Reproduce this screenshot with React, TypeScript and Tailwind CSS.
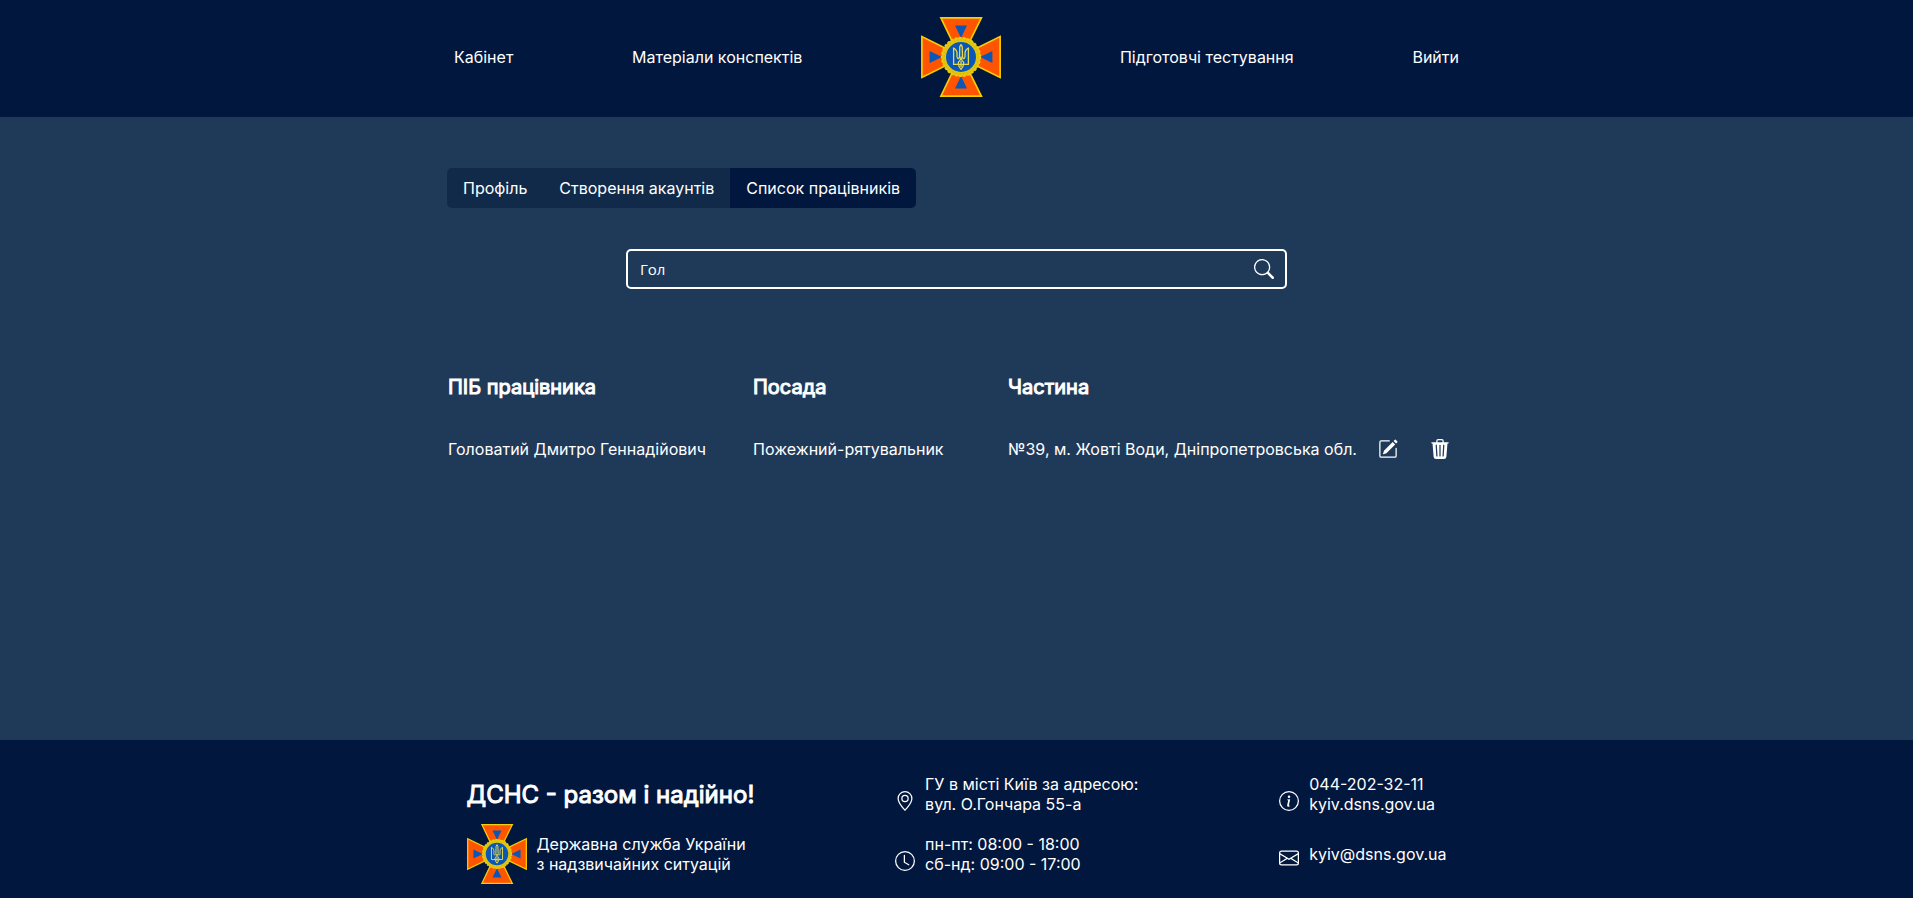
import { useState } from "react";
import type { ReactNode } from "react";
import {
  BsClock,
  BsEnvelope,
  BsGeoAlt,
  BsInfoCircle,
  BsPencilSquare,
  BsSearch,
  BsTrash3Fill,
} from "react-icons/bs";

const employees = [
  {
    name: "Головатий Дмитро Геннадійович",
    position: "Пожежний-рятувальник",
    unit: "№39, м. Жовті Води, Дніпропетровська обл.",
  },
];

const tabs = ["Профіль", "Створення акаунтів", "Список працівників"];

function Emblem({ className }: { className: string }) {
  return (
    <svg viewBox="0 0 80 80" className={className} role="img" aria-label="ДСНС">
      <g fill="#ff5500" stroke="#f8cc00" strokeWidth="1.7">
        <path d="M19.9 .9H60.4L49 24H31Z" />
        <path d="M19.9 79.1H60.4L49 56H31Z" />
        <path d="M.9 19.6V60.4L24 49V31Z" />
        <path d="M79.1 19.6V60.4L56 49V31Z" />
      </g>
      <g fill="#0b57b7">
        <path d="M34 8.6H46L40 21Z" />
        <path d="M34 71.4H46L40 59Z" />
        <path d="M8.6 34V46L21 40Z" />
        <path d="M71.4 34V46L59 40Z" />
      </g>
      <circle cx="40" cy="40" r="17.2" fill="#0b57b7" stroke="#e2c60e" strokeWidth="4.4" />
      <circle cx="40" cy="40" r="19.3" fill="none" stroke="#f0cc08" strokeWidth="1.6" strokeDasharray="2.6 1.6" />
      <circle cx="40" cy="40" r="17" fill="none" stroke="#c9b41c" strokeWidth="1" strokeDasharray="1.4 2.4" />
      <g fill="none" stroke="#e6d94a" strokeWidth="1.3" strokeLinejoin="round">
        <path d="M32.6 31V47.4H37.4C37.8 49.6 38.7 51 40 52.2C41.3 51 42.2 49.6 42.6 47.4H47.4V31C45 32.4 43.8 34.4 44 37C44.2 39.2 44.4 40.4 43.2 41.4C42 41.8 41.5 40.8 41.5 39.4L41.2 29.6L40 27.6L38.8 29.6L38.5 39.4C38.5 40.8 38 41.8 36.8 41.4C35.6 40.4 35.8 39.2 36 37C36.2 34.4 35 32.4 32.6 31Z" />
        <path d="M37.4 47.4V45.3C38.9 43.8 39.8 42.5 40 40C40.2 42.5 41.1 43.8 42.6 45.3V47.4H37.4M40 44V50" />
      </g>
    </svg>
  );
}

type ContactProps = { icon: ReactNode; single?: boolean; children: ReactNode };

function Contact({ icon, single = false, children }: ContactProps) {
  return (
    <div className="flex h-10 items-center gap-2.5">
      <span className={single ? "pt-2" : "pt-3.5"}>{icon}</span>
      <div>{children}</div>
    </div>
  );
}

export default function App() {
  const [query, setQuery] = useState("Гол");
  const [tab, setTab] = useState(2);

  return (
    <div className="flex min-h-screen flex-col bg-[#1f3a59] font-['Inter',sans-serif] text-base leading-5 text-white">
      <header className="bg-[#02173e] pt-[17px] pb-5">
        <nav className="mx-auto flex w-full max-w-[1005px] items-center justify-between">
          <a href="#cabinet">Кабінет</a>
          <a href="#materials">Матеріали конспектів</a>
          <a href="#home">
            <Emblem className="size-20" />
          </a>
          <a href="#tests">Підготовчі тестування</a>
          <a href="#logout">Вийти</a>
        </nav>
      </header>

      <main className="mx-auto w-full max-w-[1019px] flex-1 pt-[51px]">
        <div role="tablist" className="inline-flex overflow-hidden rounded-[5px] align-top">
          {tabs.map((label, i) => (
            <button
              key={label}
              type="button"
              role="tab"
              aria-selected={tab === i}
              onClick={() => setTab(i)}
              className={`h-10 px-4 ${tab === i ? "bg-[#02173e]" : "bg-[#112a4a]"}`}
            >
              {label}
            </button>
          ))}
        </div>

        <form
          role="search"
          onSubmit={(e) => e.preventDefault()}
          className="mx-auto mt-[41px] flex h-10 max-w-[661px] items-center rounded-[5px] border-2 border-white pr-[11px] pl-3"
        >
          <input
            type="text"
            aria-label="Пошук працівника"
            value={query}
            onChange={(e) => setQuery(e.target.value)}
            className="min-w-0 flex-1 bg-transparent font-['Open_Sans',sans-serif] text-[15px] outline-none"
          />
          <button type="submit" aria-label="Шукати">
            <BsSearch className="size-5" />
          </button>
        </form>

        <table className="mt-20 w-full table-fixed border-collapse text-left">
          <colgroup>
            <col className="w-[305px]" />
            <col className="w-[255px]" />
            <col />
            <col className="w-[90px]" />
          </colgroup>
          <thead>
            <tr className="h-9 text-xl">
              <th className="p-px font-normal [-webkit-text-stroke:1px_white]">ПІБ працівника</th>
              <th className="p-px font-normal [-webkit-text-stroke:1px_white]">Посада</th>
              <th className="p-px font-normal [-webkit-text-stroke:1px_white]">Частина</th>
              <td />
            </tr>
          </thead>
          <tbody>
            {employees.map((e) => (
              <tr key={e.name} className="h-[88px]">
                <td className="p-px">{e.name}</td>
                <td className="p-px">{e.position}</td>
                <td className="p-px whitespace-nowrap">{e.unit}</td>
                <td className="p-px">
                  <div className="flex gap-8 pl-px">
                    <button type="button" aria-label="Редагувати">
                      <BsPencilSquare className="size-5" />
                    </button>
                    <button type="button" aria-label="Видалити">
                      <BsTrash3Fill className="size-5" />
                    </button>
                  </div>
                </td>
              </tr>
            ))}
          </tbody>
        </table>
      </main>

      <footer className="bg-[#02173e] pt-[34px] pb-3.5">
        <div className="mx-auto flex w-full max-w-[980px] justify-between">
          <div>
            <h2 className="pt-1.5 text-2xl leading-[30px] font-normal [-webkit-text-stroke:1px_white]">
              ДСНС - разом і надійно!
            </h2>
            <div className="mt-3.5 flex items-center gap-2.5">
              <Emblem className="size-[60px]" />
              <p>
                Державна служба України
                <br />з надзвичайних ситуацій
              </p>
            </div>
          </div>
          <div className="flex flex-col gap-5">
            <Contact icon={<BsGeoAlt className="size-5" />}>
              <p>ГУ в місті Київ за адресою:</p>
              <p>вул. О.Гончара 55-а</p>
            </Contact>
            <Contact icon={<BsClock className="size-5" />}>
              <p>пн-пт: 08:00 - 18:00</p>
              <p>сб-нд: 09:00 - 17:00</p>
            </Contact>
          </div>
          <div className="flex flex-col gap-5">
            <Contact icon={<BsInfoCircle className="size-5" />}>
              <p>044-202-32-11</p>
              <a href="https://kyiv.dsns.gov.ua">kyiv.dsns.gov.ua</a>
            </Contact>
            <Contact single icon={<BsEnvelope className="size-5" />}>
              <a href="mailto:kyiv@dsns.gov.ua">kyiv@dsns.gov.ua</a>
            </Contact>
          </div>
        </div>
      </footer>
    </div>
  );
}
